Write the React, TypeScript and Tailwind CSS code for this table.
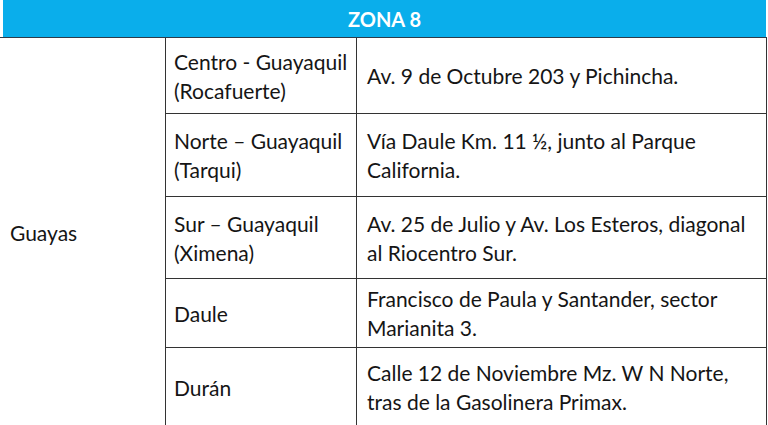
const rows = [
  { place: ["Centro - Guayaquil", "(Rocafuerte)"], address: ["Av. 9 de Octubre 203 y Pichincha."], h: "h-[75px]" },
  { place: ["Norte – Guayaquil", "(Tarqui)"], address: ["Vía Daule Km. 11 ½, junto al Parque", "California."], h: "h-[83px]" },
  { place: ["Sur – Guayaquil", "(Ximena)"], address: ["Av. 25 de Julio y Av. Los Esteros, diagonal", "al Riocentro Sur."], h: "h-[82px]" },
  { place: ["Daule"], address: ["Francisco de Paula y Santander, sector", "Marianita 3."], h: "h-[69px]" },
  { place: ["Durán"], address: ["Calle 12 de Noviembre Mz. W N Norte,", "tras de la Gasolinera Primax."], h: "h-[79px]" },
];

export default function App() {
  return (
    <div className="w-[768px] h-[425px] overflow-hidden bg-white text-[#151515] font-['Lato',sans-serif]">
      <div className="ml-[3px] w-[763px] h-[37px] bg-[#0aaeeb] flex items-center justify-center text-white font-bold text-[20px]">
        ZONA 8
      </div>
      <div className="w-[767px] flex border-t border-[#2d3b4a] text-[21px] leading-[29px]">
        <div className="w-[166px] shrink-0 flex items-center pl-[10px] border-r border-[#333]">
          Guayas
        </div>
        <div className="flex-1 flex flex-col border-r border-[#333]">
          {rows.map((r, i) => (
            <div key={i} className={`flex ${r.h} ${i > 0 ? "border-t border-[#333]" : ""}`}>
              <div className="w-[191px] shrink-0 flex flex-col justify-center pl-[8px] border-r border-[#333]">
                {r.place.map((t) => (
                  <span key={t}>{t}</span>
                ))}
              </div>
              <div className="flex-1 flex flex-col justify-center pl-[10px]">
                {r.address.map((t) => (
                  <span key={t}>{t}</span>
                ))}
              </div>
            </div>
          ))}
        </div>
      </div>
    </div>
  );
}
